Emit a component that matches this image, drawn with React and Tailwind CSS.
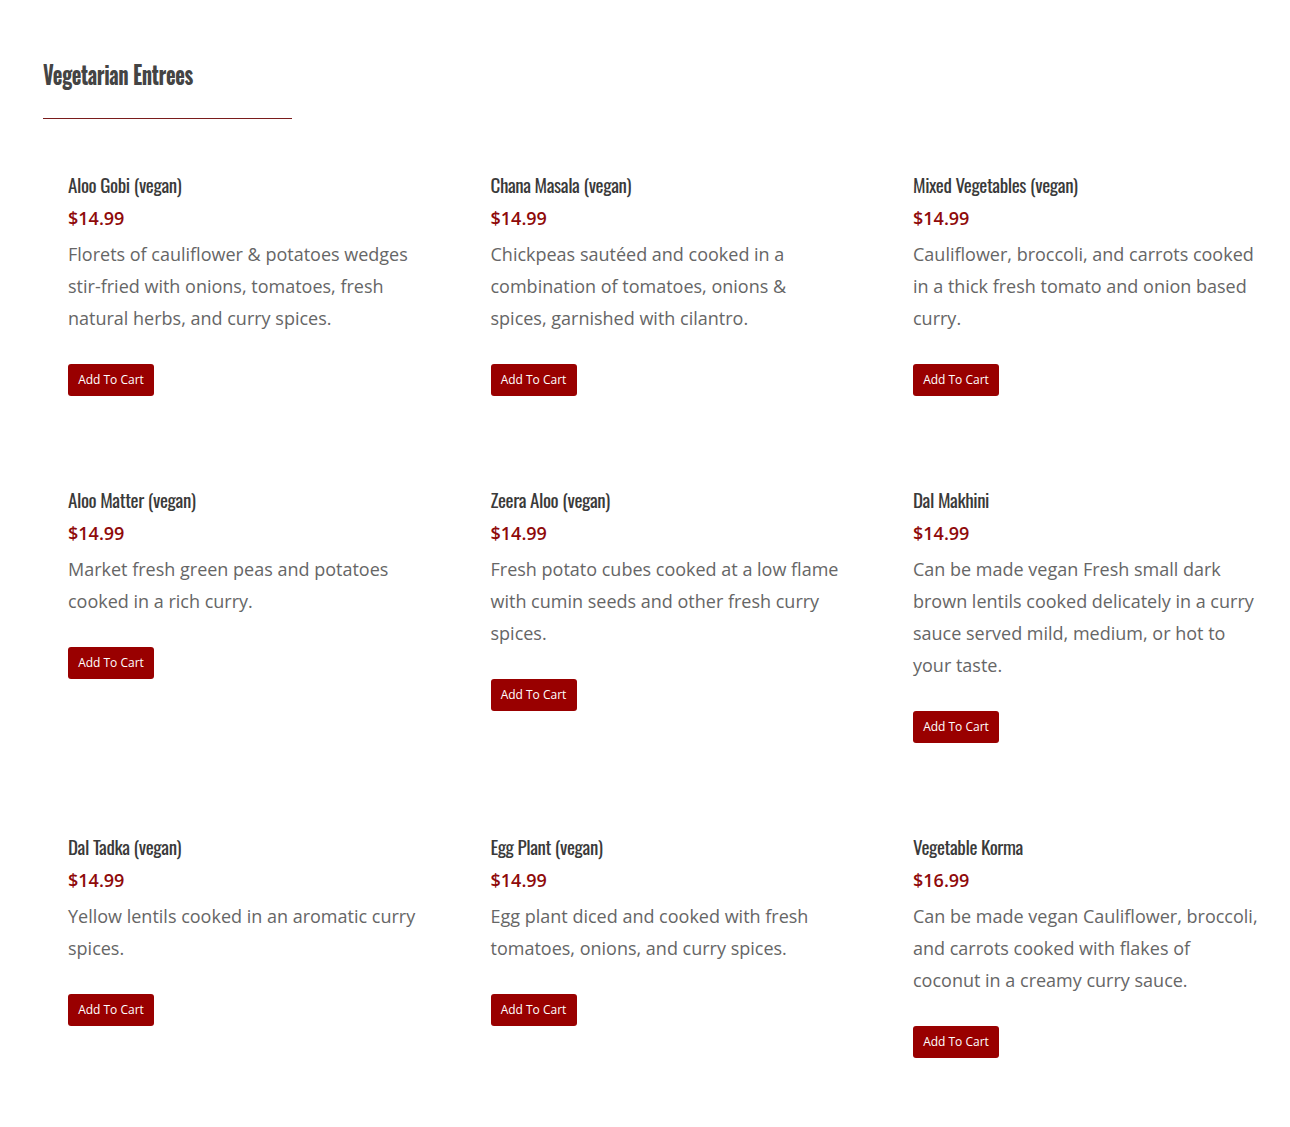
import React from "react"

const items = [
    { name: "Aloo Gobi (vegan)", price: "$14.99", desc: "Florets of cauliflower & potatoes wedges stir-fried with onions, tomatoes, fresh natural herbs, and curry spices." },
    { name: "Chana Masala (vegan)", price: "$14.99", desc: "Chickpeas sautéed and cooked in a combination of tomatoes, onions & spices, garnished with cilantro." },
    { name: "Mixed Vegetables (vegan)", price: "$14.99", desc: "Cauliflower, broccoli, and carrots cooked in a thick fresh tomato and onion based curry." },
    { name: "Aloo Matter (vegan)", price: "$14.99", desc: "Market fresh green peas and potatoes cooked in a rich curry." },
    { name: "Zeera Aloo (vegan)", price: "$14.99", desc: "Fresh potato cubes cooked at a low flame with cumin seeds and other fresh curry spices." },
    { name: "Dal Makhini", price: "$14.99", desc: "Can be made vegan Fresh small dark brown lentils cooked delicately in a curry sauce served mild, medium, or hot to your taste." },
    { name: "Dal Tadka (vegan)", price: "$14.99", desc: "Yellow lentils cooked in an aromatic curry spices." },
    { name: "Egg Plant (vegan)", price: "$14.99", desc: "Egg plant diced and cooked with fresh tomatoes, onions, and curry spices." },
    { name: "Vegetable Korma", price: "$16.99", desc: "Can be made vegan Cauliflower, broccoli, and carrots cooked with flakes of coconut in a creamy curry sauce." },
]

const condensed = { fontFamily: '"Oswald", "Liberation Sans Narrow", "DejaVu Sans Condensed", "Roboto Condensed", sans-serif' }
const body = { fontFamily: '"Open Sans", sans-serif' }

const MenuItem = ({ item }) => (
    <div className="pl-[25px] w-[422.5px]">
        <div className="w-[348.5px]">
            <h3 className="text-[19px] leading-[24px] text-[#3a3a3a] tracking-[-0.4px]" style={condensed}>
                {item.name}
            </h3>
            <p className="mt-[8px] text-[18px] leading-[28px] font-semibold text-[#8f0a0a]" style={body}>
                {item.price}
            </p>
            <p className="mt-[6px] text-[18px] leading-[32px] text-[#666]" style={body}>
                {item.desc}
            </p>
            <button className="block mt-[30px] h-[32px] w-[86px] rounded-[3px] bg-[#990000] text-white text-[12px]" style={body}>
                Add To Cart
            </button>
        </div>
    </div>
)

export default function App() {
    return (
        <div className="min-h-[1127px] bg-white pt-[58px] pl-[43px]">
            <h2 className="text-[25px] leading-[32px] font-bold text-[#444] tracking-[-0.5px] origin-left scale-x-[0.82]" style={condensed}>
                Vegetarian Entrees
            </h2>
            <div className="mt-[28px] w-[249px] h-px bg-[#7a1c1c]" />
            <div className="mt-[53px] grid grid-cols-[repeat(3,422.5px)] gap-y-[91px]">
                {items.map((item) => (
                    <MenuItem key={item.name} item={item} />
                ))}
            </div>
        </div>
    )
}
